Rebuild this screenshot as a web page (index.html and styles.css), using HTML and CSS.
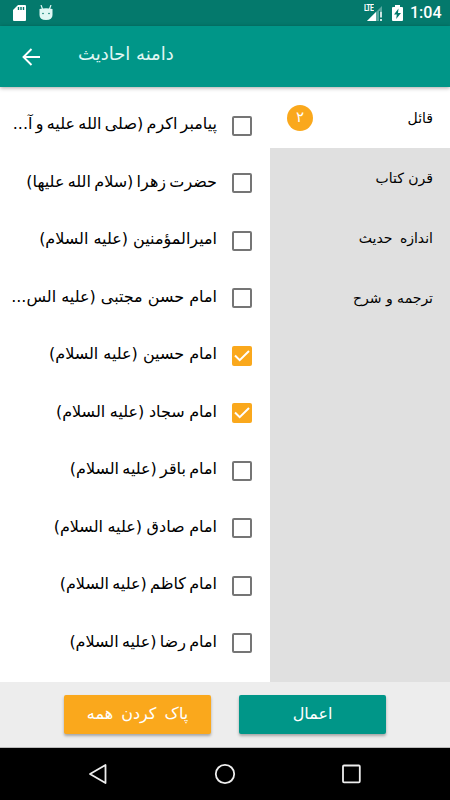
FILE: index.html
```html
<!DOCTYPE html>
<html lang="fa">
<head>
    <meta charset="UTF-8">
    <meta name="viewport" content="width=device-width, initial-scale=1.0">
    <title>دامنه احادیث</title>
    <link rel="stylesheet" href="styles.css">
</head>
<body>
    <div class="status-bar">
        <svg class="icon-sd" width="13" height="16" viewBox="0 0 13 16">
            <path d="M5 0h7q1 0 1 1v14q0 1-1 1H1q-1 0-1-1V5z" fill="#fff"/>
            <path d="M5.500 2v3M8 2v3M10.500 2v3" stroke="#04796c" stroke-width="1.4"/>
        </svg>
        <svg class="icon-droid" width="14" height="16" viewBox="0 0 14 16">
            <path d="M2 0l1.500 4M12 0l-1.500 4" stroke="#e0f7f4" stroke-width="1.2"/>
            <path d="M.5 4Q7 2.500 13.500 4v6q0 5-6.500 5T.5 10z" fill="#e0f7f4"/>
            <circle cx="4" cy="8.500" r=".8" fill="#04796c"/>
            <circle cx="10" cy="8.500" r=".8" fill="#04796c"/>
        </svg>
        <div class="status-right">
            <span class="lte">LTE</span>
            <svg class="icon-signal" width="16" height="16" viewBox="0 0 16 16">
                <path d="M0 16L15 1v15z" fill="#59a89f"/>
                <path d="M0 16l9-9v9z" fill="#fff"/>
                <path d="M12 6h4v10h-4z" fill="#04796c"/>
                <path d="M14 6.500v6M14 14v2" stroke="#fff" stroke-width="1.600"/>
            </svg>
            <svg class="icon-battery" width="11" height="16" viewBox="0 0 11 16">
                <path d="M3 0h5v2h2q1 0 1 1v12q0 1-1 1H1q-1 0-1-1V3q0-1 1-1h2z" fill="#fff"/>
                <path d="M6.500 3.500L2 9.500h2.800L4.200 14 9 8H6z" fill="#04796c"/>
            </svg>
            <span class="clock">1:04</span>
        </div>
    </div>

    <header class="app-bar">
        <svg class="icon-back" width="18" height="18" viewBox="0 0 18 18">
            <path d="M9.500 1L1.500 9l8 8M1.500 9H18" fill="none" stroke="#fff" stroke-width="1.900"/>
        </svg>
        <h1 class="title">دامنه احادیث</h1>
    </header>

    <main class="content">
        <ul class="options">
            <li><span class="box"></span><span class="name tight">پیامبر اکرم (صلی الله علیه و آ...</span></li>
            <li><span class="box"></span><span class="name tight">حضرت زهرا (سلام الله علیها)</span></li>
            <li><span class="box"></span><span class="name">امیرالمؤمنین (علیه السلام)</span></li>
            <li><span class="box"></span><span class="name">امام حسن مجتبی (علیه الس...</span></li>
            <li>
                <span class="box checked"><svg width="20" height="20" viewBox="0 0 20 20"><path d="M3 9.500l4.700 4.700L17 5" fill="none" stroke="#fff" stroke-width="2"/></svg></span>
                <span class="name">امام حسین (علیه السلام)</span>
            </li>
            <li>
                <span class="box checked"><svg width="20" height="20" viewBox="0 0 20 20"><path d="M3 9.500l4.700 4.700L17 5" fill="none" stroke="#fff" stroke-width="2"/></svg></span>
                <span class="name snug">امام سجاد (علیه السلام)</span>
            </li>
            <li><span class="box"></span><span class="name tight">امام باقر (علیه السلام)</span></li>
            <li><span class="box"></span><span class="name snug">امام صادق (علیه السلام)</span></li>
            <li><span class="box"></span><span class="name tight">امام کاظم (علیه السلام)</span></li>
            <li><span class="box"></span><span class="name tight">امام رضا (علیه السلام)</span></li>
        </ul>
        <ul class="tabs">
            <li class="active"><span>قائل</span><span class="badge">۲</span></li>
            <li><span>قرن کتاب</span></li>
            <li><span class="wide">اندازه حدیث</span></li>
            <li><span>ترجمه و شرح</span></li>
        </ul>
    </main>

    <footer class="actions">
        <button class="btn btn-clear">پاک کردن همه</button>
        <button class="btn btn-apply">اعمال</button>
    </footer>

    <nav class="nav-bar">
        <svg width="20" height="22" viewBox="0 0 20 22"><path d="M17.500 2v18L2 11z" fill="none" stroke="#eee" stroke-width="1.800" stroke-linejoin="round"/></svg>
        <svg width="22" height="22" viewBox="0 0 22 22"><circle cx="11" cy="11" r="9.200" fill="none" stroke="#eee" stroke-width="1.800"/></svg>
        <svg width="20" height="22" viewBox="0 0 20 22"><rect x="2" y="2.500" width="16.800" height="16.800" rx="1" fill="none" stroke="#eee" stroke-width="1.800"/></svg>
    </nav>
</body>
</html>
```
FILE: styles.css
```css
* {
    box-sizing: border-box;
}

body {
    margin: 0;
    width: 450px;
    height: 800px;
    display: flex;
    flex-direction: column;
    overflow: hidden;
    background: #fff;
    color: #000;
    font-family: "DejaVu Sans", sans-serif;
}

ul {
    list-style: none;
    margin: 0;
    padding: 0;
}

svg {
    display: block;
}

/* status bar */
.status-bar {
    height: 26px;
    flex: none;
    display: flex;
    align-items: center;
    padding: 0 9px 0 13px;
    background: #04796c;
    color: #fff;
}

.icon-droid {
    margin-left: 13px;
}

.status-right {
    display: flex;
    align-items: center;
    margin-left: auto;
}

.lte {
    width: 11px;
    align-self: flex-start;
    margin: 5px -8px 0 0;
    font: bold 7px/8px "Roboto", sans-serif;
    letter-spacing: -0.7px;
    transform: scaleY(1.4);
}

.icon-battery {
    margin: 0 7px 0 9px;
}

.clock {
    width: 31px;
    font: 500 16px/28px "Roboto", sans-serif;
}

/* app bar */
.app-bar {
    position: relative;
    height: 61px;
    flex: none;
    display: flex;
    align-items: center;
    padding-left: 22px;
    background: #009688;
    box-shadow: 0 1px 4px rgba(0, 0, 0, 0.35);
}

.title {
    margin: 0 0 6px 38px;
    color: #e0f7f4;
    font-size: 18px;
    font-weight: normal;
    direction: rtl;
}

/* two columns */
.content {
    flex: 1;
    display: flex;
    min-height: 0;
}

.options {
    width: 270px;
    padding: 10px 18px 0 0;
    direction: rtl;
}

.options li {
    display: flex;
    align-items: center;
    height: 57.5px;
}

.box {
    width: 20px;
    height: 20px;
    flex: none;
    margin-left: 15px;
    border: 2px solid #757575;
    border-radius: 2px;
}

.box.checked {
    border: 0;
    background: #faa81c;
}

.name {
    font-size: 16px;
    line-height: 24px;
    padding-bottom: 3px;
    white-space: nowrap;
}

.snug {
    word-spacing: -0.5px;
}

.tight {
    word-spacing: -1.8px;
}

.tabs {
    flex: 1;
    padding-top: 1px;
    background: #e0e0e0;
    direction: rtl;
}

.tabs li {
    display: flex;
    align-items: center;
    justify-content: space-between;
    height: 60px;
    padding: 0 17px 1px;
    font-size: 14px;
}

.tabs .active {
    margin-top: -1px;
    padding-bottom: 0;
    height: 61px;
    background: #fff;
}

.wide {
    word-spacing: 3px;
}

.badge {
    width: 26px;
    height: 26px;
    border-radius: 50%;
    background: #faa81c;
    color: #fff;
    font-size: 15px;
    line-height: 25px;
    text-align: center;
}

/* bottom buttons */
.actions {
    display: flex;
    flex: none;
    gap: 28px;
    height: 66px;
    padding: 13px 0 0 64px;
    background: #ededed;
    border-bottom: 1px solid #bbb;
}

.btn {
    width: 147px;
    height: 39px;
    padding: 0 0 3px;
    border: 0;
    border-radius: 2px;
    color: #fff;
    font: 16px "DejaVu Sans", sans-serif;
    word-spacing: 3px;
    direction: rtl;
    box-shadow: 0 2px 3px rgba(0, 0, 0, 0.3);
}

.btn-clear {
    background: #faa81c;
}

.btn-apply {
    background: #009688;
}

/* system navigation */
.nav-bar {
    display: flex;
    flex: none;
    align-items: center;
    justify-content: space-between;
    height: 52px;
    padding: 0 89px 0 88px;
    background: #000;
}
```
